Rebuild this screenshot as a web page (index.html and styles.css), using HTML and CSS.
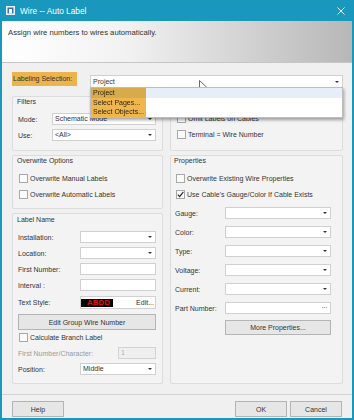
FILE: index.html
```html
<!DOCTYPE html>
<html lang="en">
<head>
    <meta charset="UTF-8">
    <title>Wire -- Auto Label</title>
    <link rel="stylesheet" href="styles.css">
</head>
<body>
    <div class="window">
        <div class="titlebar">
            <svg class="app-icon" width="9" height="9" viewBox="0 0 9 9">
                <rect x="0" y="0" width="9" height="9" fill="#e8f2fa"/>
                <rect x="1.5" y="1.5" width="6" height="6" fill="#3b6fb6"/>
                <rect x="3" y="3" width="3" height="4.5" fill="#ffffff"/>
            </svg>
            <span class="title">Wire -- Auto Label</span>
            <svg class="close" width="8" height="8" viewBox="0 0 8 8">
                <path d="M0.5 0.5 L7.5 7.5 M7.5 0.5 L0.5 7.5" stroke="#ffffff" stroke-width="0.9"/>
            </svg>
        </div>

        <div class="banner">Assign wire numbers to wires automatically.</div>

        <div class="content">
            <div class="selection">
                <span class="sel-label">Labeling Selection:</span>
                <div class="combo sel-combo">
                    <span>Project</span><i class="arrow"></i>
                    <ul class="dropdown">
                        <li class="hover">Project</li>
                        <li>Select Pages...</li>
                        <li>Select Objects...</li>
                        <li class="annot"></li>
                    </ul>
                </div>
            </div>

            <div class="columns">
                <div class="col">
                    <div class="group filters">
                        <div class="group-title">Filters</div>
                        <div class="row first">
                            <span class="lbl short">Mode:</span>
                            <div class="combo grow">Schematic Mode<i class="arrow"></i></div>
                        </div>
                        <div class="row">
                            <span class="lbl short">Use:</span>
                            <div class="combo grow">&lt;All&gt;<i class="arrow"></i></div>
                        </div>
                    </div>

                    <div class="group overwrite">
                        <div class="group-title">Overwrite Options</div>
                        <div class="row check first"><span class="box"></span>Overwrite Manual Labels</div>
                        <div class="row check"><span class="box"></span>Overwrite Automatic Labels</div>
                    </div>

                    <div class="group label-name">
                        <div class="group-title">Label Name</div>
                        <div class="row first">
                            <span class="lbl">Installation:</span>
                            <div class="combo grow"><i class="arrow"></i></div>
                        </div>
                        <div class="row">
                            <span class="lbl">Location:</span>
                            <div class="combo grow"><i class="arrow"></i></div>
                        </div>
                        <div class="row">
                            <span class="lbl">First Number:</span>
                            <div class="field grow"></div>
                        </div>
                        <div class="row">
                            <span class="lbl">Interval :</span>
                            <div class="field grow"></div>
                        </div>
                        <div class="row style-row">
                            <span class="lbl">Text Style:</span>
                            <div class="field grow text-style">
                                <span class="preview">ABDD</span>
                                <span class="edit">Edit...</span>
                            </div>
                        </div>
                        <button class="btn wide">Edit Group Wire Number</button>
                        <div class="row check branch"><span class="box"></span>Calculate Branch Label</div>
                        <div class="row disabled">
                            <span class="lbl long">First Number/Character:</span>
                            <div class="field grow off">1</div>
                        </div>
                        <div class="row">
                            <span class="lbl">Position:</span>
                            <div class="combo grow">Middle<i class="arrow"></i></div>
                        </div>
                    </div>
                </div>

                <div class="col">
                    <div class="group cables">
                        <div class="row check first"><span class="box"></span>Omit Labels on Cables</div>
                        <div class="row check"><span class="box"></span>Terminal = Wire Number</div>
                    </div>

                    <div class="group properties">
                        <div class="group-title">Properties</div>
                        <div class="row check first"><span class="box"></span>Overwrite Existing Wire Properties</div>
                        <div class="row check">
                            <span class="box checked">
                                <svg width="7" height="7" viewBox="0 0 7 7"><path d="M0.8 3.6 L2.7 5.6 L6.3 0.9" stroke="#222" stroke-width="1.1" fill="none"/></svg>
                            </span>Use Cable's Gauge/Color If Cable Exists
                        </div>
                        <div class="row prop gap">
                            <span class="lbl">Gauge:</span>
                            <div class="combo grow"><i class="arrow"></i></div>
                        </div>
                        <div class="row prop">
                            <span class="lbl">Color:</span>
                            <div class="combo grow"><i class="arrow"></i></div>
                        </div>
                        <div class="row prop">
                            <span class="lbl">Type:</span>
                            <div class="combo grow"><i class="arrow"></i></div>
                        </div>
                        <div class="row prop">
                            <span class="lbl">Voltage:</span>
                            <div class="combo grow"><i class="arrow"></i></div>
                        </div>
                        <div class="row prop">
                            <span class="lbl">Current:</span>
                            <div class="combo grow"><i class="arrow"></i></div>
                        </div>
                        <div class="row prop">
                            <span class="lbl">Part Number:</span>
                            <div class="field grow dots">···</div>
                        </div>
                        <button class="btn more">More Properties...</button>
                    </div>
                </div>
            </div>
        </div>

        <div class="footer">
            <button class="btn foot">Help</button>
            <span class="spacer"></span>
            <button class="btn foot">OK</button>
            <button class="btn foot">Cancel</button>
        </div>

        <!-- mouse pointer over the combo -->
        <svg class="cursor" width="9" height="13" viewBox="0 0 9 13">
            <path d="M0.5 0.5 L0.5 10.5 L3 8.2 L4.8 12.2 L6.3 11.5 L4.6 7.6 L8 7.6 Z" fill="#ffffff" stroke="#444" stroke-width="0.8"/>
        </svg>
    </div>
</body>
</html>
```

FILE: styles.css
```css
body {
    margin: 0;
    font-family: "Liberation Sans", Arial, sans-serif;
    font-size: 7px;
    color: #333;
}

.window {
    position: relative;
    width: 354px;
    height: 420px;
    box-sizing: border-box;
    padding: 0 2px 2px;
    background-color: #1a97bd;
    display: flex;
    flex-direction: column;
}

/* title bar */
.titlebar {
    height: 21px;
    display: flex;
    align-items: center;
    padding: 0 7px 0 4px;
    color: #fff;
    font-size: 8.3px;
}

.app-icon {
    margin-right: 5px;
}

.title {
    flex: 1;
}

/* description banner */
.banner {
    height: 42px;
    box-sizing: border-box;
    padding: 7px 6px 0;
    line-height: 10px;
    font-size: 7.7px;
    color: #333;
    background: linear-gradient(to right, #ffffff 0%, #f2f2f2 35%, #b7b7b7 100%);
    border-bottom: 1px solid #c6c6c6;
}

.content {
    background-color: #f0f0f0;
    padding: 0 9px 0 10px;
}

.selection {
    display: flex;
    margin-top: 9px;
    height: 16px;
}

.sel-label {
    width: 65px;
    height: 14px;
    line-height: 14px;
    padding-left: 1px;
    box-sizing: border-box;
    background-color: #ebb44d;
}

.sel-combo {
    flex: 1;
    margin: 3px 0 0 13px;
    height: 13px !important;
    line-height: 11px !important;
}

/* combo boxes and fields */
.combo, .field {
    position: relative;
    height: 12px;
    box-sizing: border-box;
    background-color: #fff;
    border: 1px solid #d0d0d0;
    padding-left: 2px;
    line-height: 10px;
    white-space: nowrap;
}

.grow {
    flex: 1;
}

.arrow {
    position: absolute;
    right: 3px;
    top: 50%;
    margin-top: -1px;
    border-left: 2px solid transparent;
    border-right: 2px solid transparent;
    border-top: 2.5px solid #333;
}

.dropdown {
    position: absolute;
    list-style: none;
    margin: 0;
    padding: 0;
    top: 11px;
    left: -1px;
    right: -1px;
    background-color: #fff;
    border: 1px solid #bdbdbd;
    box-shadow: 1px 2px 3px rgba(0, 0, 0, 0.35);
    z-index: 2;
}

.dropdown li {
    height: 9.6px;
    line-height: 9.6px;
    padding-left: 2px;
}

.dropdown li.hover {
    background-color: #e6eef9;
}

.dropdown li.annot {
    position: absolute;
    left: 0;
    top: 0;
    width: 55px;
    height: 100%;
    padding: 0;
    background-color: #efb64e;
    mix-blend-mode: multiply;
}

/* two columns of group boxes */
.columns {
    display: grid;
    grid-template-columns: 151px 1fr;
    gap: 7px;
    margin-top: 8px;
    height: 288px;
}

.col {
    display: flex;
    flex-direction: column;
    gap: 4px;
}

.group {
    box-sizing: border-box;
    border: 1px solid #dcdcdc;
    border-radius: 2px;
    background-color: #f3f3f3;
    padding: 0 6px 0 5px;
    display: flex;
    flex-direction: column;
}

.group-title {
    height: 10px;
    line-height: 10px;
    margin-left: -1px;
}

.row {
    display: flex;
    align-items: center;
    height: 12px;
    margin-top: 4px;
}

.lbl {
    width: 62px;
    flex: none;
}

.lbl.short {
    width: 34px;
}

.lbl.long {
    width: 100px;
}

.check .box {
    width: 9px;
    height: 9px;
    box-sizing: border-box;
    border: 1px solid #a8a8a8;
    background-color: #fafafa;
    margin: 0 2px 0 1px;
    display: flex;
    align-items: center;
    justify-content: center;
}

.filters {
    height: 55px;
}

.filters .row.first {
    margin-top: 6px;
}

.overwrite {
    height: 54px;
}

.overwrite .row.first {
    margin-top: 6px;
}

.label-name {
    flex: 1;
}

.label-name .group-title {
    margin-top: 1px;
}

.label-name .row.first {
    margin-top: 6px;
}

.label-name .style-row {
    height: 13px;
    margin-top: 5px;
}

.text-style {
    height: 13px;
    display: flex;
    align-items: center;
    padding-left: 0;
}

.preview {
    width: 32px;
    height: 8px;
    background-color: #000;
    color: #e01010;
    font-size: 8px;
    line-height: 8px;
    font-weight: bold;
    padding-left: 6px;
    box-sizing: border-box;
    overflow: hidden;
}

.edit {
    margin-left: auto;
    padding-right: 1px;
}

.btn {
    font-family: inherit;
    font-size: 7px;
    color: #333;
    background-color: #e6e6e6;
    border: 1px solid #b4b4b4;
    padding: 0;
    box-sizing: border-box;
}

.btn.wide {
    height: 16px;
    margin-top: 5px;
}

.branch {
    margin-top: 1px;
}

.disabled {
    color: #9a9a9a;
}

.field.off {
    background-color: #efefef;
    border-color: #d3d3d3;
    color: #b0b0b0;
}

/* right column */
.cables {
    height: 55px;
}

.cables .row.first {
    margin-top: 15px;
}

.properties {
    flex: 1;
    padding: 0 11px 0 4px;
}

.properties .row.first {
    margin-top: 6px;
}

.properties .lbl {
    width: 50px;
}

.properties .prop {
    margin-top: 7px;
}

.dots {
    text-align: right;
    padding-right: 3px;
    letter-spacing: -0.5px;
}

.btn.more {
    height: 15px;
    margin: 6px 0 0 50px;
}

/* footer */
.footer {
    flex: 1;
    display: flex;
    align-items: flex-start;
    gap: 3px;
    background-color: #f0f0f0;
    padding: 17px 10px 0;
    background-image: linear-gradient(#d4d4d4, #d4d4d4);
    background-size: 100% 1px;
    background-position: 0 10px;
    background-repeat: no-repeat;
}

.spacer {
    flex: 1;
}

.btn.foot {
    width: 52px;
    height: 16px;
}

.cursor {
    position: absolute;
    left: 199px;
    top: 80px;
}
```
